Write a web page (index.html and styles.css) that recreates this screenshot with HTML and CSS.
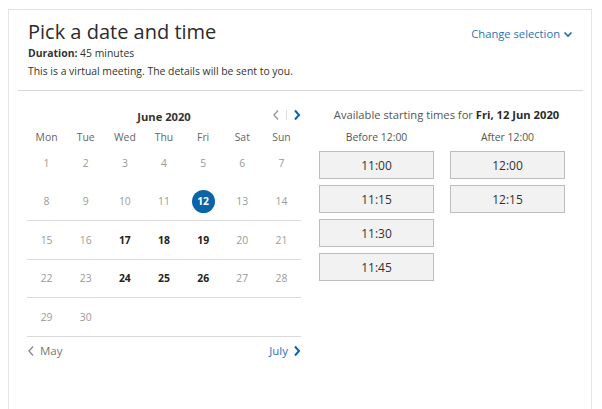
FILE: index.html
```html
<!DOCTYPE html>
<html>
<head>
<meta charset="utf-8">
<link rel="stylesheet" href="styles.css">
</head>
<body>
<div class="card">
  <div class="header">
    <div class="intro">
      <h1 class="title">Pick a date and time</h1>
      <div class="line"><b>Duration:</b> 45 minutes</div>
      <div class="line">This is a virtual meeting. The details will be sent to you.</div>
    </div>
    <a class="change">Change selection
      <svg class="chev-down" width="10" height="7" viewBox="0 0 10 7"><path d="M1.5 1.5 L5 5 L8.5 1.5" fill="none" stroke="#1b6bb3" stroke-width="1.6"/></svg>
    </a>
  </div>
  <div class="body">
    <div class="calendar">
      <div class="month-row">
        <span class="month">June 2020</span>
        <div class="nav">
          <svg width="8" height="12" viewBox="0 0 8 12"><path d="M6 1.5 L2 6 L6 10.5" fill="none" stroke="#999" stroke-width="1.4"/></svg>
          <span class="nav-sep"></span>
          <svg width="8" height="12" viewBox="0 0 8 12"><path d="M2 1.5 L6 6 L2 10.5" fill="none" stroke="#0d64ad" stroke-width="2"/></svg>
        </div>
      </div>
      <div class="week head">
        <span>Mon</span><span>Tue</span><span>Wed</span><span>Thu</span><span>Fri</span><span>Sat</span><span>Sun</span>
      </div>
      <div class="week">
        <span>1</span><span>2</span><span>3</span><span>4</span><span>5</span><span>6</span><span>7</span>
      </div>
      <div class="week">
        <span>8</span><span>9</span><span>10</span><span>11</span><span><b class="sel">12</b></span><span>13</span><span>14</span>
      </div>
      <div class="week">
        <span>15</span><span>16</span><span class="av">17</span><span class="av">18</span><span class="av">19</span><span>20</span><span>21</span>
      </div>
      <div class="week">
        <span>22</span><span>23</span><span class="av">24</span><span class="av">25</span><span class="av">26</span><span>27</span><span>28</span>
      </div>
      <div class="week">
        <span>29</span><span>30</span><span></span><span></span><span></span><span></span><span></span>
      </div>
      <div class="foot">
        <span class="prev">
          <svg width="8" height="12" viewBox="0 0 8 12"><path d="M6 1.5 L2 6 L6 10.5" fill="none" stroke="#888" stroke-width="1.3"/></svg>
          May
        </span>
        <span class="next">July
          <svg width="8" height="12" viewBox="0 0 8 12"><path d="M2 1.5 L6 6 L2 10.5" fill="none" stroke="#0d64ad" stroke-width="2"/></svg>
        </span>
      </div>
    </div>
    <div class="times">
      <div class="times-title">Available starting times for <b>Fri, 12 Jun 2020</b></div>
      <div class="cols">
        <div class="col">
          <div class="col-head">Before 12:00</div>
          <button class="slot">11:00</button>
          <button class="slot">11:15</button>
          <button class="slot">11:30</button>
          <button class="slot">11:45</button>
        </div>
        <div class="col">
          <div class="col-head">After 12:00</div>
          <button class="slot">12:00</button>
          <button class="slot">12:15</button>
        </div>
      </div>
    </div>
  </div>
</div>
</body>
</html>
```

FILE: styles.css
```css
html, body {
  margin: 0;
  padding: 0;
  background: #fff;
}
body {
  font-family: "Open Sans", "Noto Sans", sans-serif;
  color: #333;
}
.card {
  margin: 9px 10px 0 8px;
  height: 399px;
  border: 1px solid #e4e4e4;
  border-bottom: none;
  padding: 0 8px 0 9px;
}
.header {
  display: flex;
  justify-content: space-between;
  align-items: flex-start;
  padding: 10px 10px 0 10px;
  height: 70px;
  border-bottom: 1px solid #d6d6d6;
}
.title {
  margin: 0;
  font-size: 20px;
  font-weight: 400;
  line-height: 24px;
  color: #2b2b2b;
}
.line {
  font-size: 10.4px;
  line-height: 18px;
  color: #333;
}
.line b { font-weight: 700; }
.change {
  margin-top: 6px;
  font-size: 11.2px;
  line-height: 16px;
  color: #2a73b8;
  display: flex;
  align-items: center;
  gap: 3px;
  cursor: pointer;
}
.body {
  display: flex;
  padding-left: 9px;
}
.calendar {
  width: 274px;
  padding-top: 14px;
}
.month-row {
  position: relative;
  height: 20px;
  line-height: 20px;
  text-align: center;
}
.month {
  font-size: 11.2px;
  font-weight: 700;
  color: #333;
}
.nav {
  position: absolute;
  right: 0;
  top: 0;
  height: 20px;
  display: flex;
  align-items: center;
  gap: 6px;
}
.nav-sep {
  width: 1px;
  height: 10px;
  background: #ddd;
}
.week {
  display: grid;
  grid-template-columns: repeat(7, 1fr);
  height: 37.5px;
  border-bottom: 1px solid #d9d9d9;
  align-items: center;
  text-align: center;
  font-size: 10.4px;
  color: #9a9a9a;
}
.week.head {
  margin-top: 5px;
  height: 14px;
  border-bottom: none;
  color: #666;
}
.week:nth-child(3) {
  border-bottom: none;
  height: 38.5px;
}
.av {
  font-weight: 700;
  color: #222;
}
.sel {
  display: inline-block;
  width: 23px;
  height: 23px;
  line-height: 23px;
  border-radius: 50%;
  background: #0a64a8;
  color: #fff;
  font-weight: 700;
}
.foot {
  display: flex;
  justify-content: space-between;
  align-items: center;
  height: 28px;
  font-size: 11.5px;
}
.prev {
  display: flex;
  align-items: center;
  gap: 5px;
  color: #777;
}
.next {
  display: flex;
  align-items: center;
  gap: 5px;
  color: #2a73b8;
}
.times {
  width: 273px;
  margin-left: 9px;
  padding-top: 14px;
}
.times-title {
  height: 20px;
  line-height: 20px;
  text-align: center;
  font-size: 11.2px;
  color: #555;
}
.times-title b {
  color: #2b2b2b;
}
.cols {
  display: flex;
  gap: 16px;
  padding-left: 9px;
  margin-top: 4px;
}
.col {
  width: 115px;
  display: flex;
  flex-direction: column;
  gap: 6px;
}
.col-head {
  height: 16px;
  line-height: 16px;
  text-align: center;
  font-size: 10.4px;
  color: #555;
  margin-bottom: 0;
}
.slot {
  height: 28px;
  width: 115px;
  border: 1px solid #bdbdbd;
  background: #f2f2f2;
  font-family: "Open Sans", "Noto Sans", sans-serif;
  font-size: 12px;
  color: #333;
  padding: 0;
}
```
